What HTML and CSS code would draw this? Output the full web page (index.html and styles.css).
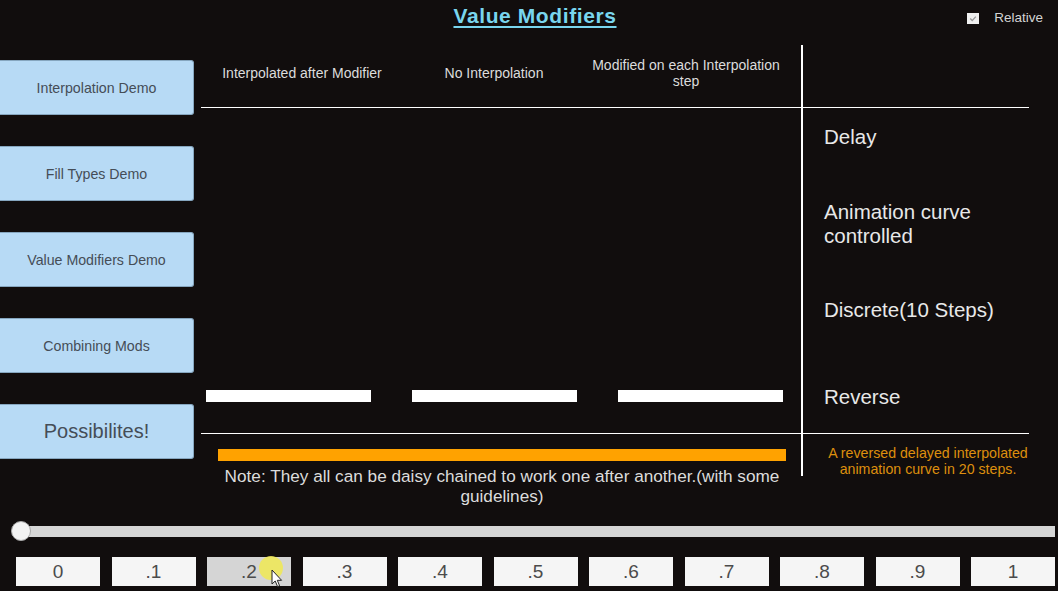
FILE: index.html
```html
<!DOCTYPE html>
<html>
<head>
<meta charset="utf-8">
<link rel="stylesheet" href="styles.css">
</head>
<body>
<header class="topbar">
  <h1 class="title">Value Modifiers</h1>
  <label class="relative">
    <span class="check"><svg width="12" height="11" viewBox="0 0 12 11"><path d="M3.2 5.6 L5.2 7.6 L8.8 3.6" fill="none" stroke="#9a9a9a" stroke-width="1.4"/></svg></span>
    <span>Relative</span>
  </label>
</header>

<div class="middle">
  <nav class="sidebar">
    <div class="side-btn">Interpolation Demo</div>
    <div class="side-btn">Fill Types Demo</div>
    <div class="side-btn">Value Modifiers Demo</div>
    <div class="side-btn">Combining Mods</div>
    <div class="side-btn big">Possibilites!</div>
  </nav>

  <section class="board">
    <div class="head">
      <span>Interpolated after Modifier</span>
      <span>No Interpolation</span>
      <span>Modified on each Interpolation step</span>
    </div>
    <div class="vline"></div>
    <div class="hline top"></div>
    <div class="demo">
      <div class="bar"></div>
      <div class="bar"></div>
      <div class="bar"></div>
    </div>
    <div class="labels">
      <div>Delay</div>
      <div>Animation curve controlled</div>
      <div>Discrete(10 Steps)</div>
      <div>Reverse</div>
    </div>
    <div class="hline bottom"></div>
    <div class="note-cell">
      <div class="orange-bar"></div>
      <p class="note">Note: They all can be daisy chained to work one after another.(with some guidelines)</p>
    </div>
    <p class="caption">A reversed delayed interpolated animation curve in 20 steps.</p>
  </section>
</div>

<div class="slider">
  <div class="track"></div>
  <div class="thumb"></div>
</div>

<div class="steps">
  <div class="step">0</div>
  <div class="step">.1</div>
  <div class="step hover">.2</div>
  <div class="step">.3</div>
  <div class="step">.4</div>
  <div class="step">.5</div>
  <div class="step">.6</div>
  <div class="step">.7</div>
  <div class="step">.8</div>
  <div class="step">.9</div>
  <div class="step">1</div>
</div>

<div class="pointer">
  <span class="halo"></span>
  <svg class="arrow" width="13" height="19" viewBox="0 0 13 19"><path d="M1 1 L1 15 L4.2 12 L6.6 17.6 L8.6 16.8 L6.3 11.3 L10.6 11.3 Z" fill="#fff" stroke="#222" stroke-width="1" stroke-linejoin="round"/></svg>
</div>
</body>
</html>
```

FILE: styles.css
```css
* { box-sizing: border-box; }

body {
  margin: 0;
  width: 1058px;
  height: 591px;
  overflow: hidden;
  position: relative;
  background: #110d0d;
  font-family: "Liberation Sans", Arial, sans-serif;
}

.topbar {
  height: 45px;
  display: grid;
  grid-template-columns: 1fr auto 1fr;
  padding-left: 12px;
}

.title {
  grid-column: 2;
  margin: 3px 0 0;
  font-size: 21px;
  line-height: 26px;
  font-weight: bold;
  letter-spacing: 0.6px;
  color: #79d5ee;
  text-decoration: underline;
  text-decoration-thickness: 2px;
  text-underline-offset: 3px;
}

.relative {
  grid-column: 3;
  justify-self: end;
  align-self: start;
  display: flex;
  align-items: center;
  gap: 15px;
  padding: 10px 15px 0 0;
  font-size: 13.5px;
  line-height: 16px;
  color: #d4d4d4;
}

.check {
  width: 12px;
  height: 11px;
  background: #f0f0f0;
  display: flex;
}

.middle {
  display: flex;
  align-items: flex-start;
  height: 470px;
}

.sidebar {
  width: 194px;
  flex: none;
  display: flex;
  flex-direction: column;
  gap: 31px;
  padding-top: 15px;
}

.side-btn {
  height: 55px;
  background: #b7daf5;
  border: 1px solid #86a6bf;
  border-left: none;
  border-radius: 0 3px 3px 0;
  color: #454d57;
  font-size: 14.2px;
  display: flex;
  align-items: center;
  justify-content: center;
}

.side-btn.big { font-size: 20px; }

.board {
  margin-left: 7px;
  display: grid;
  grid-template-columns: 600px 2px 250px;
  grid-template-rows: 62px 1px 325px 1px auto;
}

.head {
  grid-column: 1;
  grid-row: 1;
  display: flex;
  align-items: center;
  padding: 0 0 6px 5px;
}

.head span {
  width: 192px;
  flex: none;
  text-align: center;
  font-size: 14px;
  line-height: 16px;
  color: #dcdcdc;
}

.vline {
  grid-column: 2;
  grid-row: 1 / 6;
  align-self: start;
  width: 2px;
  height: 431px;
  background: #fff;
}

.hline {
  grid-column: 1 / 4;
  width: 828px;
  height: 1px;
  background: #fff;
}
.hline.top { grid-row: 2; }
.hline.bottom { grid-row: 4; }

.demo {
  grid-column: 1;
  grid-row: 3;
  display: flex;
  align-items: flex-end;
  gap: 41px;
  padding: 0 0 31px 5px;
}

.bar {
  width: 165px;
  height: 12px;
  background: #fff;
}

.labels {
  grid-column: 3;
  grid-row: 3;
  margin-top: -14px;
  display: grid;
  grid-template-rows: repeat(4, 86.5px);
  align-items: center;
  padding-left: 21px;
  font-size: 20.5px;
  line-height: 24px;
  color: #e8e8e8;
}

.note-cell {
  grid-column: 1;
  grid-row: 5;
  padding: 15px 0 0 17px;
}

.orange-bar {
  width: 568px;
  height: 12px;
  background: #ffa200;
}

.note {
  width: 568px;
  margin: 5px 0 0;
  text-align: center;
  font-size: 17.2px;
  line-height: 20px;
  color: #dcdcdc;
}

.caption {
  grid-column: 3;
  grid-row: 5;
  margin: 0;
  padding-top: 11px;
  text-align: center;
  font-size: 14.2px;
  line-height: 16px;
  color: #dd8f0e;
}

.slider {
  position: relative;
  height: 32px;
  margin: 0 3px 0 14px;
  display: flex;
  align-items: center;
}

.track {
  flex: 1;
  height: 11px;
  background: #d6d6d6;
}

.thumb {
  position: absolute;
  left: -3px;
  top: 6px;
  width: 20px;
  height: 20px;
  border-radius: 50%;
  background: #f3f3f3;
  border: 1px solid #a8a8a8;
}

.steps {
  display: flex;
  gap: 11.5px;
  padding-left: 16px;
  margin-top: 10px;
}

.step {
  width: 84px;
  height: 29px;
  flex: none;
  background: #f5f5f5;
  color: #4b4b4b;
  font-size: 19px;
  display: flex;
  align-items: center;
  justify-content: center;
}

.step.hover { background: #d5d5d5; }

.pointer {
  position: absolute;
  left: 259px;
  top: 556px;
  width: 26px;
  height: 34px;
}

.halo {
  position: absolute;
  left: 0;
  top: 0;
  width: 24px;
  height: 24px;
  border-radius: 50%;
  background: rgba(238, 232, 90, 0.9);
}

.arrow {
  position: absolute;
  left: 12px;
  top: 13px;
}
```
